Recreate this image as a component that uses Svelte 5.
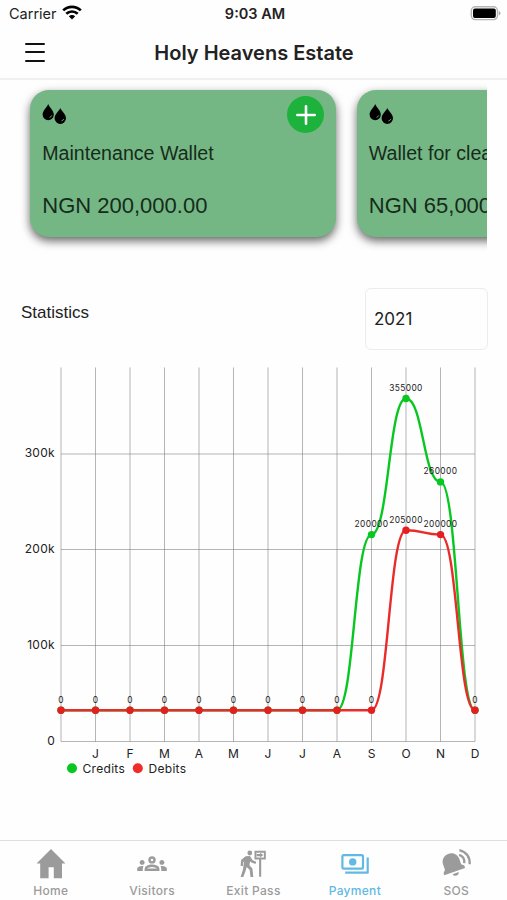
<script>
  const wallets = [
    { name: 'Maintenance Wallet', balance: 'NGN 200,000.00' },
    { name: 'Wallet for cleaning', balance: 'NGN 65,000.00' }
  ];

  const months = ['J', 'F', 'M', 'A', 'M', 'J', 'J', 'A', 'S', 'O', 'N', 'D'];
  const credits = [0, 0, 0, 0, 0, 0, 0, 0, 0, 200000, 355000, 260000, 0];
  const debits = [0, 0, 0, 0, 0, 0, 0, 0, 0, 0, 205000, 200000, 0];
  const ticks = [
    { label: '300k', y: 454 },
    { label: '200k', y: 549.5 },
    { label: '100k', y: 645.5 },
    { label: '0', y: 741.5 }
  ];

  // chart coordinates, the svg viewBox starts at y = 360
  const px = (i) => 61 + i * 34.5;
  const py = (v) => 710.2 - v * 0.000878;

  // horizontal easing between neighbours, like a bezier line chart
  function curve(values) {
    let d = `M${px(0)} ${py(values[0])}`;
    for (let i = 1; i < values.length; i++) {
      const mid = (px(i - 1) + px(i)) / 2;
      d += ` C${mid} ${py(values[i - 1])} ${mid} ${py(values[i])} ${px(i)} ${py(values[i])}`;
    }
    return d;
  }

  const tabs = ['Home', 'Visitors', 'Exit Pass', 'Payment', 'SOS'];
  let active = 'Payment';
</script>

<div class="screen">
  <div class="status-bar">
    <div class="carrier">
      <span>Carrier</span>
      <svg width="20" height="15" viewBox="0 0 20 15">
        <g fill="none" stroke="#000" stroke-width="2.7">
          <path d="M1.2 5.4C6.2.6 13.8.6 18.8 5.4" />
          <path d="M4.3 8.8c3.2-3.1 8.2-3.1 11.4 0" />
        </g>
        <path d="M6.8 11.2c1.8-1.7 4.6-1.7 6.4 0L10 14.4z" />
      </svg>
    </div>
    <div class="time">9:03 AM</div>
    <div class="battery">
      <svg width="31" height="15" viewBox="0 0 31 15">
        <rect x="1.3" y=".8" width="26.2" height="12.8" rx="4" fill="#fff" stroke="#b5b5b5" stroke-width="1.4" />
        <rect x="3" y="2.5" width="22.8" height="9.4" rx="2" />
        <path d="M28.8 5c2.2.7 2.2 3.7 0 4.4z" fill="#aaa" />
      </svg>
    </div>
  </div>

  <header>
    <button class="menu" aria-label="Menu">
      <span></span><span></span><span></span>
    </button>
    <h1>Holy Heavens Estate</h1>
  </header>

  <main>
    <div class="wallets">
      {#each wallets as wallet}
        <div class="wallet">
          <div class="wallet-top">
            <svg class="drops" width="26" height="22" viewBox="0 0 26 22">
              <path d="M6.2 1C7.4 4.3 11.8 7.4 11.8 11.6a5.6 5.6 0 0 1-11.2 0C.6 7.4 5 4.3 6.2 1z" />
              <path d="M18.3 5c1.2 3.1 5.7 6 5.7 10.2a5.7 5.7 0 0 1-11.4 0C12.6 11 17.1 8.1 18.3 5z" />
              <path d="M7.5 14.4q1.7-.4 2.4-2.1M19.4 18q1.8-.4 2.5-2.1" fill="none" stroke="#83b98f" stroke-width=".8" />
            </svg>
            <button class="add" aria-label="Add">
              <svg width="20" height="20" viewBox="0 0 20 20">
                <path d="M10 1.3v17.4M1.3 10h17.4" stroke="#fff" stroke-width="2.6" stroke-linecap="round" />
              </svg>
            </button>
          </div>
          <div class="wallet-name">{wallet.name}</div>
          <div class="wallet-balance">{wallet.balance}</div>
        </div>
      {/each}
    </div>

    <div class="stats-head">
      <h2>Statistics</h2>
      <div class="year">2021</div>
    </div>

    <svg class="chart" width="507" height="420" viewBox="0 360 507 420">
      <g stroke="#808080" stroke-opacity=".58" stroke-width="1">
        {#each credits as _, i}
          <line x1={px(i)} x2={px(i)} y1="367.5" y2="741.5" />
        {/each}
        {#each ticks as tick}
          <line x1="61" x2="475" y1={tick.y} y2={tick.y} />
        {/each}
      </g>
      {#each ticks as tick}
        <text class="tick" x="55" y={tick.y + 3.3} text-anchor="end">{tick.label}</text>
      {/each}
      {#each months as month, i}
        <text class="month" x={px(i + 1)} y="758" text-anchor="middle">{month}</text>
      {/each}

      <path class="line" d={curve(credits)} stroke="#08c720" />
      {#each credits as value, i}
        <circle cx={px(i)} cy={py(value)} r="3.7" fill="#08c720" />
      {/each}
      <path class="line" d={curve(debits)} stroke="#e82c2a" />
      {#each debits as value, i}
        <circle cx={px(i)} cy={py(value)} r="3.7" fill="#e3201f" />
      {/each}

      {#each credits as value, i}
        {#if value}
          <text class="value" x={px(i)} y={py(value) - 7.7} text-anchor="middle">{value}</text>
        {/if}
      {/each}
      {#each debits as value, i}
        <text class="value" x={px(i)} y={py(value) - 7.7} text-anchor="middle">{value}</text>
      {/each}

      <circle cx="72" cy="768.3" r="5" fill="#08c720" />
      <text class="legend" x="82.5" y="773">Credits</text>
      <circle cx="137.8" cy="768.3" r="5" fill="#f02c2b" />
      <text class="legend" x="148.5" y="773">Debits</text>
    </svg>
  </main>

  <nav>
    {#each tabs as tab}
      <button class="tab" class:active={tab === active} on:click={() => (active = tab)}>
        <svg width="34" height="32" viewBox="0 0 34 32" fill="currentColor">
          {#if tab === 'Home'}
            <path d="M17 1 31.5 15.4H28V30.3H19.8V19.2H14.6V30.3H6.2V15.4H2.5z" />
          {:else if tab === 'Visitors'}
            <g transform="translate(2.2 .8) scale(1.235)">
              <path d="M4 13c1.1 0 2-.9 2-2s-.9-2-2-2-2 .9-2 2 .9 2 2 2zm1.13 1.1C4.76 14.04 4.39 14 4 14c-.99 0-1.93.21-2.78.58C.48 14.9 0 15.62 0 16.43V18h4.5v-1.61c0-.83.23-1.61.63-2.29zM20 13c1.1 0 2-.9 2-2s-.9-2-2-2-2 .9-2 2 .9 2 2 2zm4 3.43c0-.81-.48-1.53-1.22-1.85A6.95 6.95 0 0 0 20 14c-.39 0-.76.04-1.13.1.4.68.63 1.46.63 2.29V18H24zm-7.76-2.78A10.5 10.5 0 0 0 12 12.75c-1.63 0-3.07.39-4.24.9A2.99 2.99 0 0 0 6 16.39V18h12v-1.61c0-1.18-.68-2.26-1.76-2.74zM8.07 16c.09-.23.13-.39.91-.69A8.3 8.3 0 0 1 12 14.75c1.01 0 2.01.19 3.02.56.77.3.81.46.91.69zM12 8c.55 0 1 .45 1 1s-.45 1-1 1-1-.45-1-1 .45-1 1-1m0-2a3 3 0 1 0 0 6 3 3 0 0 0 0-6z" />
            </g>
          {:else if tab === 'Exit Pass'}
            <circle cx="13.8" cy="5" r="2.4" />
            <path d="M9.6 8.2 14 8l2.6 4.2 3.6 1.6-.7 2.1-4.6-1.7-.8-1-.7 4 3 3.4.9 8.4h-2.8l-.8-7-3-3-1.5 5L7.3 29H4.6l2.4-7.5 1.1-8-.8.6-.4 4H4.6l.5-6z" />
            <path d="M18.5 2.8h11.3v8.6H25.2v17.4h-2.1V11.4h-4.6zm1.9 1.9v4.8h7.5V4.7z" fill-rule="evenodd" />
            <path d="M20.6 6h3.5V4.8L27.4 7.1l-3.3 2.3V8.2h-3.5z" />
          {:else if tab === 'Payment'}
            <g fill="none" stroke="currentColor" stroke-width="2.2" stroke-linejoin="round">
              <rect x="4.4" y="7.2" width="20.6" height="13.4" rx="1.4" />
              <path d="M29.7 9.5V24.7H7.2" />
            </g>
            <circle cx="14.7" cy="13.9" r="3.7" />
          {:else}
            <g transform="rotate(-19 14 18)">
              <path d="M2.8 23.8v-2.2l2.3-2.4V14c0-5.1 3.2-8.6 7.6-9 5.6-.5 9.6 3.2 9.6 8.6v5.3l2.5 2.4v2.5z" />
              <path d="M11 25.6h6.4c-.5 3.5-5.8 3.7-6.4 0z" />
            </g>
            <g fill="none" stroke="currentColor" stroke-width="2.3">
              <path d="M20.1 6.9q6 2 5.1 8.2" />
              <path d="M20.4 2.1q10.8 3 10.3 14.2" />
            </g>
          {/if}
        </svg>
        <span>{tab}</span>
      </button>
    {/each}
  </nav>
</div>

<style>
  :global(body) {
    background: #fefefe;
  }

  .screen {
    width: 507px;
    height: 900px;
    display: flex;
    flex-direction: column;
    overflow: hidden;
    font-family: Inter, sans-serif;
    color: #222;
  }

  button {
    border: 0;
    padding: 0;
    background: none;
    font-family: inherit;
  }

  .status-bar {
    height: 27px;
    display: grid;
    grid-template-columns: 1fr auto 1fr;
    align-items: center;
    padding: 0 6px 0 9px;
    font-size: 14.5px;
  }

  .carrier {
    display: flex;
    align-items: center;
    gap: 5px;
  }

  .carrier svg {
    margin-top: -2px;
  }

  .time {
    font-weight: 600;
    font-size: 14.5px;
  }

  .battery {
    display: flex;
    justify-content: flex-end;
  }

  header {
    height: 51px;
    display: grid;
    grid-template-columns: 60px 1fr 59px;
    align-items: center;
    border-bottom: 2px solid #f0f0f0;
  }

  .menu {
    display: flex;
    flex-direction: column;
    gap: 6.5px;
    margin-top: -1px;
    padding-left: 25px;
  }

  .menu span {
    width: 20px;
    height: 2px;
    border-radius: 1px;
    background: #111;
  }

  h1 {
    margin: 0;
    text-align: center;
    font-size: 20px;
    line-height: 24px;
    font-weight: 600;
  }

  main {
    flex: 1;
    min-height: 0;
  }

  .wallets {
    display: flex;
    gap: 20.5px;
    height: 184px;
    box-sizing: border-box;
    margin-right: 20px;
    padding: 10px 0 0 30.3px;
    overflow: hidden;
  }

  .wallet {
    flex: 0 0 306px;
    height: 147px;
    box-sizing: border-box;
    padding: 6px 12px 0 12px;
    border-radius: 19px;
    background: #74b784;
    box-shadow: 0 4px 10px rgba(0, 0, 0, 0.6);
    font-family: "Liberation Sans", sans-serif;
    color: #172b1b;
  }

  .wallet-top {
    display: flex;
    justify-content: space-between;
    height: 37px;
  }

  .drops {
    margin-top: 7px;
  }

  .add {
    width: 37px;
    height: 37px;
    display: flex;
    align-items: center;
    justify-content: center;
    border-radius: 50%;
    background: #1db23b;
  }

  .wallet-name {
    margin-top: 8px;
    font-size: 19.6px;
    line-height: 24px;
    white-space: nowrap;
  }

  .wallet-balance {
    margin-top: 28px;
    font-size: 22px;
    line-height: 26px;
    white-space: nowrap;
  }

  .stats-head {
    display: flex;
    justify-content: space-between;
    height: 96px;
    padding: 24px 19px 0 21px;
    box-sizing: border-box;
  }

  h2 {
    margin: 14px 0 0;
    font-family: "Liberation Sans", sans-serif;
    font-size: 17px;
    line-height: 22px;
    font-weight: 400;
  }

  .year {
    width: 123px;
    height: 62px;
    box-sizing: border-box;
    padding-left: 8px;
    border: 1px solid #ececec;
    border-radius: 6px;
    font-size: 17px;
    line-height: 61px;
  }

  .chart {
    display: block;
  }

  .line {
    fill: none;
    stroke-width: 2.4;
  }

  .tick,
  .month,
  .legend {
    font-size: 12px;
    fill: #222;
  }

  .tick,
  .legend {
    letter-spacing: 0.3px;
  }

  .value {
    font-size: 8.4px;
    letter-spacing: 0.4px;
    fill: #222;
  }

  nav {
    display: grid;
    grid-template-columns: repeat(5, 1fr);
    height: 60px;
    box-sizing: border-box;
    border-top: 1px solid #dedede;
  }

  .tab {
    display: flex;
    flex-direction: column;
    align-items: center;
    padding-top: 7px;
    color: #9b9b9b;
  }

  .tab span {
    margin-top: 3px;
    font-size: 12px;
    line-height: 15px;
    font-weight: 500;
    letter-spacing: 0.3px;
  }

  .tab.active {
    color: #62b9e4;
  }
</style>
